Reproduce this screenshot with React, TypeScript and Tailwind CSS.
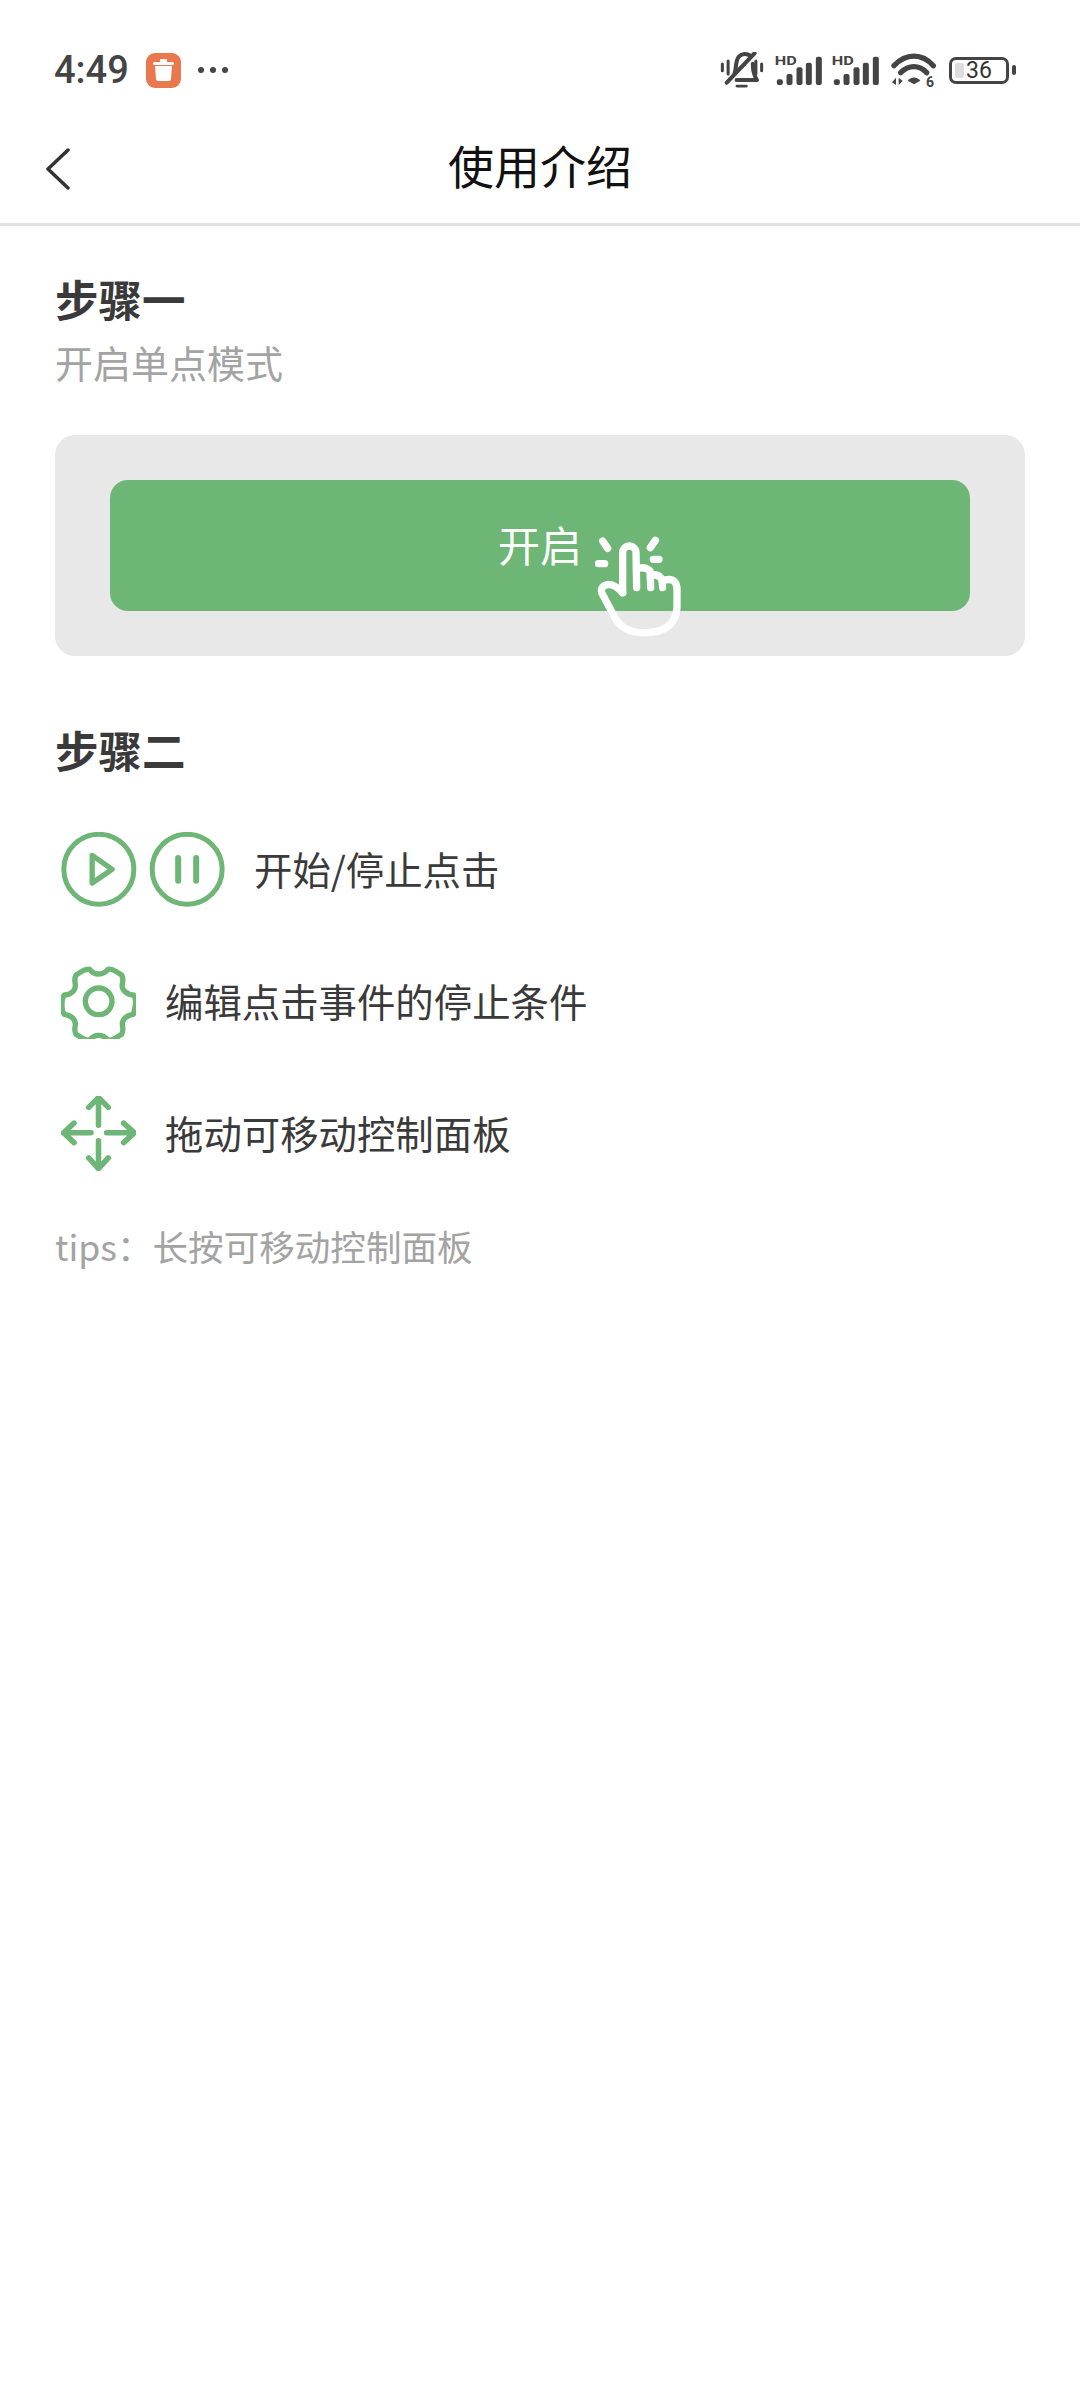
import React from 'react';

const CJK = 'font-["Noto_Sans_CJK_SC","Noto_Sans",sans-serif]';

// Signal bars with the small HD tag above them
const SignalIcon: React.FC = () => (
  <svg width="47" height="30" viewBox="285 75 140 90" className="overflow-visible">
    <text x="284" y="106" fontFamily="Roboto, sans-serif" fontWeight="700" fontSize="40" textLength="66" lengthAdjust="spacingAndGlyphs" fill="#444">HD</text>
    <rect x="290" y="148" width="18" height="17" rx="6" fill="#444" />
    <rect x="319" y="132" width="18" height="33" rx="6" fill="#444" />
    <rect x="349" y="112" width="18" height="53" rx="6" fill="#444" />
    <rect x="377" y="98" width="18" height="67" rx="6" fill="#444" />
    <rect x="407" y="80" width="18" height="85" rx="6" fill="#444" />
  </svg>
);

const StatusBar: React.FC = () => (
  <div className="h-[115px] pt-[50px] pl-[54px] pr-[64px] flex items-start justify-between">
    <div className="flex items-center h-[40px]">
      <span className="font-['Roboto',sans-serif] font-medium text-[38px] leading-none text-[#444] w-[92px]">4:49</span>
      <div className="w-[35px] h-[35px] rounded-[9px] bg-[#E9784F] flex items-center justify-center">
        <svg width="21" height="22" viewBox="0 0 21 22">
          <rect x="7" y="0" width="7" height="3" rx="1" fill="#fff" />
          <rect x="0" y="3" width="21" height="3" rx="1.5" fill="#fff" />
          <path d="M2 7h17l-1 13a2 2 0 0 1-2 2H5a2 2 0 0 1-2-2z" fill="#fff" />
        </svg>
      </div>
      <div className="flex gap-[6px] ml-[17px]">
        <span className="w-[6px] h-[6px] rounded-full bg-[#444]" />
        <span className="w-[6px] h-[6px] rounded-full bg-[#444]" />
        <span className="w-[6px] h-[6px] rounded-full bg-[#444]" />
      </div>
    </div>
    <div className="flex items-center h-[40px]">
      {/* muted bell */}
      <svg width="44" height="36" viewBox="120 70 130 105" fill="none" stroke="#444" strokeLinecap="round" strokeLinejoin="round">
        <path d="M127 105v20M243 105v20" strokeWidth="9" />
        <path d="M144 96v38M226 96v38" strokeWidth="9" />
        <path d="M163 132c6-14 2-36 12-48 10-11 24-11 36-3M217 104c0 18 2 32 12 48h-60" strokeWidth="12" />
        <path d="M140 160 222 73" strokeWidth="12" />
        <path d="M170 170h28" strokeWidth="8" />
      </svg>
      <div className="ml-[11px]"><SignalIcon /></div>
      <div className="ml-[10px]"><SignalIcon /></div>
      {/* wifi with up/down arrows and 6 */}
      <svg width="46" height="34" viewBox="628 72 138 102" fill="none" className="ml-[11px] overflow-visible">
        <path d="M640 110c36-38 84-38 118 0" stroke="#444" strokeWidth="16" strokeLinecap="round" />
        <path d="M660 131c24-24 56-24 78 0" stroke="#444" strokeWidth="16" strokeLinecap="round" />
        <path d="M681 155c12-13 26-13 38 0l-19 11z" fill="#444" />
        <path d="M646 146v22l-12-8zM654 146v22l12-12z" fill="#444" />
        <text x="736" y="173" fontFamily="Roboto, sans-serif" fontWeight="700" fontSize="42" fill="#444">6</text>
      </svg>
      <div className="ml-[13px] relative w-[60px] h-[27px] rounded-[7px] border-[3px] border-[#444] flex items-center justify-center">
        <span className="absolute left-[3px] top-[3px] bottom-[3px] w-[9px] bg-[#ddd] rounded-[2px]" />
        <span className="relative font-['Roboto',sans-serif] text-[23px] leading-none text-[#333]">36</span>
      </div>
      <span className="ml-[3px] w-[4px] h-[10px] rounded-[2px] bg-[#444]" />
    </div>
  </div>
);

const Hand: React.FC = () => (
  <svg width="90" height="104" viewBox="465 165 270 312" fill="none" stroke="#fff" strokeWidth="22" strokeLinecap="round" strokeLinejoin="round" className="absolute left-[540px] top-[101px]">
    <path d="M548 335V215a20 20 0 0 1 40 0l2 105" />
    <path d="M590 265q22-12 40 5l2 50" />
    <path d="M632 285q20-10 34 10l2 25" />
    <path d="M666 300q40-15 45 20v60q-5 75-100 75-61 0-86-45l-40-75q-5-20 20-25 20 0 43 25" />
    <path d="M488 180l15 22M475 248h19M646 178l-15 22M640 235h17" />
  </svg>
);

const PlayPauseIcons: React.FC = () => (
  <svg width="164" height="75" viewBox="62 65 491 225" fill="none" stroke="#6DB675" strokeLinecap="round" strokeLinejoin="round">
    <circle cx="175" cy="177" r="105" strokeWidth="15" />
    <path d="M155 135l60 42-60 41z" strokeWidth="16" />
    <circle cx="440" cy="177" r="105" strokeWidth="15" />
    <path d="M413 143v68M467 143v68" strokeWidth="18" />
  </svg>
);

const GearIcon: React.FC = () => (
  <svg width="75" height="75" viewBox="62 460 225 225" fill="none" stroke="#6DB675" strokeWidth="16" strokeLinejoin="round">
    <path d="M125 482q12-8 23-6 10 14 27 14t28-14q12-2 23 6l18 11q5 10 3 22-5 18 7 28t25 10q9 8 6 29t-6 29q-14 1-25 11t-7 27q2 12-3 22l-18 11q-11 8-23 6-11-14-28-14t-27 14q-12 2-23-6l-18-11q-5-10-3-22 4-17-7-27t-25-11q-7-8-7-29t7-29q14 0 25-10t7-28q-2-12 3-22z" />
    <circle cx="175" cy="572" r="40" />
  </svg>
);

const MoveIcon: React.FC = () => (
  <svg width="75" height="75" viewBox="60 855 230 230" fill="none" stroke="#6DB675" strokeWidth="17" strokeLinecap="round" strokeLinejoin="round">
    <path d="M175 865v80M145 890l30-30 30 30" />
    <path d="M175 992v83M145 1045l30 33 30-33" />
    <path d="M72 968h80M100 938l-32 30 32 30" />
    <path d="M200 968h82M252 938l33 30-33 30" />
  </svg>
);

const Row: React.FC<{ icon: React.ReactNode; label: string }> = ({ icon, label }) => (
  <div className="flex items-center h-[75px] pl-[6px] gap-[29px]">
    {icon}
    <span className="text-[38.4px] leading-none text-[#3a3a3a] pb-[3px]">{label}</span>
  </div>
);

export default function App() {
  return (
    <div className={`w-[1080px] h-[2400px] bg-white ${CJK}`}>
      <StatusBar />

      {/* Title bar */}
      <header className="relative h-[111px] flex items-center justify-center border-b-[3px] border-[#e2e2e2]">
        <svg width="24" height="42" viewBox="0 0 24 42" fill="none" stroke="#333" strokeWidth="3.5" strokeLinecap="round" strokeLinejoin="round" className="absolute left-[46px] top-[33px]">
          <path d="M22 2 2 21l20 19" />
        </svg>
        <h1 className="text-[46px] leading-none font-normal text-[#111] pb-[10px]">使用介绍</h1>
      </header>

      <main className="px-[55px]">
        <h2 className="pt-[44px] text-[43.5px] leading-[58px] font-bold text-[#3a3a3a]">步骤一</h2>
        <p className="mt-[9px] text-[38px] leading-[50px] text-[#a3a3a3]">开启单点模式</p>

        <div className="relative mt-[48px] h-[221px] rounded-[20px] bg-[#E8E8E8] pt-[45px] px-[55px]">
          <div className="h-[131px] rounded-[18px] bg-[#6DB675] flex items-center justify-center">
            <span className="text-[42px] leading-none text-white pb-[4px]">开启</span>
          </div>
          <Hand />
        </div>

        <h2 className="mt-[65px] text-[43.5px] leading-[58px] font-bold text-[#3a3a3a]">步骤二</h2>

        <div className="mt-[53px] flex flex-col gap-[57px]">
          <Row icon={<PlayPauseIcons />} label="开始/停止点击" />
          <Row icon={<GearIcon />} label="编辑点击事件的停止条件" />
          <Row icon={<MoveIcon />} label="拖动可移动控制面板" />
        </div>

        <p className="mt-[50px] text-[35.6px] leading-[50px] text-[#a3a3a3]">tips：长按可移动控制面板</p>
      </main>
    </div>
  );
}
